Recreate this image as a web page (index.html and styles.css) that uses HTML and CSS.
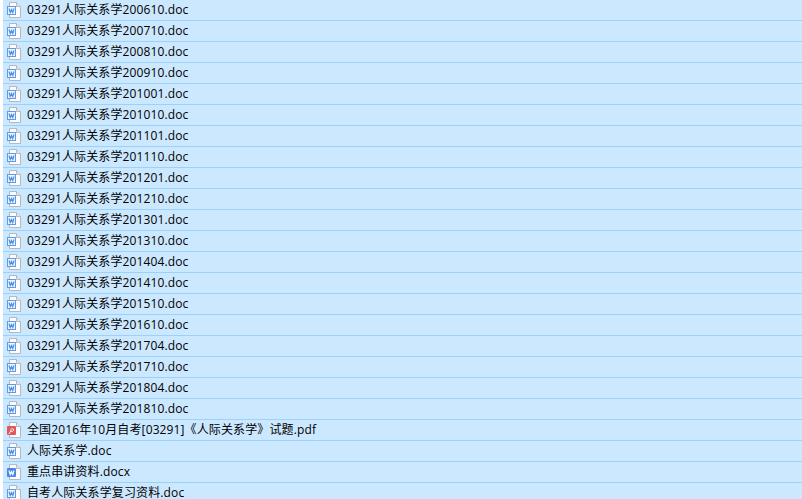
FILE: index.html
```html
<!DOCTYPE html>
<html lang="en">
<head>
  <meta charset="UTF-8">
  <title>03291</title>
  <link rel="stylesheet" href="styles.css">
</head>
<body>
  <svg class="defs" width="0" height="0">
    <symbol id="page" viewBox="0 0 16 18">
      <path d="M3.500 2.500H10.500L14.500 6.500V17.500H3.500Z" fill="#fbfcfd" stroke="#b3b8c1"/>
      <path d="M10.500 2.500V6.500H14.500" fill="#e4e7ec" stroke="#b3b8c1"/>
    </symbol>
    <symbol id="doc" viewBox="0 0 16 18">
      <use href="#page"/>
      <rect x="1.500" y="6.500" width="8" height="8" fill="#eef5fe" stroke="#5f9be8"/>
      <path d="M3 8.500L4.200 12.500L5.500 9.500L6.800 12.500L8 8.500" fill="none" stroke="#4f8fe6" stroke-width="1.200"/>
    </symbol>
    <symbol id="docx" viewBox="0 0 16 18">
      <use href="#page"/>
      <rect x="1" y="6" width="9" height="9" rx="1" fill="#4a86e8"/>
      <path d="M3 8.500L4.200 12.500L5.500 9.500L6.800 12.500L8 8.500" fill="none" stroke="#fff" stroke-width="1.200"/>
    </symbol>
    <symbol id="pdf" viewBox="0 0 16 18">
      <use href="#page"/>
      <rect x="1" y="6" width="9" height="9" rx="1" fill="#e2575a"/>
      <path d="M3 14C4 12 5 11 5 9.500A1.300 1.300 0 1 1 7.500 10.500C7 11.500 5.500 11.500 4.500 11.500" fill="none" stroke="#fff"/>
    </symbol>
  </svg>

  <ul class="file-list">
    <li class="file"><svg class="icon"><use href="#doc"/></svg>03291人际关系学200610.doc</li>
    <li class="file"><svg class="icon"><use href="#doc"/></svg>03291人际关系学200710.doc</li>
    <li class="file"><svg class="icon"><use href="#doc"/></svg>03291人际关系学200810.doc</li>
    <li class="file"><svg class="icon"><use href="#doc"/></svg>03291人际关系学200910.doc</li>
    <li class="file"><svg class="icon"><use href="#doc"/></svg>03291人际关系学201001.doc</li>
    <li class="file"><svg class="icon"><use href="#doc"/></svg>03291人际关系学201010.doc</li>
    <li class="file"><svg class="icon"><use href="#doc"/></svg>03291人际关系学201101.doc</li>
    <li class="file"><svg class="icon"><use href="#doc"/></svg>03291人际关系学201110.doc</li>
    <li class="file"><svg class="icon"><use href="#doc"/></svg>03291人际关系学201201.doc</li>
    <li class="file"><svg class="icon"><use href="#doc"/></svg>03291人际关系学201210.doc</li>
    <li class="file"><svg class="icon"><use href="#doc"/></svg>03291人际关系学201301.doc</li>
    <li class="file"><svg class="icon"><use href="#doc"/></svg>03291人际关系学201310.doc</li>
    <li class="file"><svg class="icon"><use href="#doc"/></svg>03291人际关系学201404.doc</li>
    <li class="file"><svg class="icon"><use href="#doc"/></svg>03291人际关系学201410.doc</li>
    <li class="file"><svg class="icon"><use href="#doc"/></svg>03291人际关系学201510.doc</li>
    <li class="file"><svg class="icon"><use href="#doc"/></svg>03291人际关系学201610.doc</li>
    <li class="file"><svg class="icon"><use href="#doc"/></svg>03291人际关系学201704.doc</li>
    <li class="file"><svg class="icon"><use href="#doc"/></svg>03291人际关系学201710.doc</li>
    <li class="file"><svg class="icon"><use href="#doc"/></svg>03291人际关系学201804.doc</li>
    <li class="file"><svg class="icon"><use href="#doc"/></svg>03291人际关系学201810.doc</li>
    <li class="file"><svg class="icon"><use href="#pdf"/></svg>全国2016年10月自考[03291]《人际关系学》试题.pdf</li>
    <li class="file"><svg class="icon"><use href="#doc"/></svg>人际关系学.doc</li>
    <li class="file"><svg class="icon"><use href="#docx"/></svg>重点串讲资料.docx</li>
    <li class="file"><svg class="icon"><use href="#doc"/></svg>自考人际关系学复习资料.doc</li>
  </ul>
</body>
</html>
```

FILE: styles.css
```css
html,
body {
  height: 100%;
}

body {
  margin: 0;
  overflow: hidden;
  background: #fff;
  font-family: "Open Sans", "Noto Sans CJK SC", sans-serif;
  font-size: 12px;
  letter-spacing: 0.12px;
  color: #000;
}

.defs {
  display: block;
  height: 0;
}

.file-list {
  list-style: none;
  margin: 0;
  padding: 0 0 0 3px;
}

.file {
  display: flex;
  align-items: center;
  gap: 5px;
  box-sizing: border-box;
  height: 21px;
  padding: 0 0 2px 3px;
  background: #cce8ff;
  border-bottom: 1px solid #99d1ff;
  white-space: nowrap;
}

.icon {
  flex: none;
  width: 16px;
  height: 18px;
}
```
